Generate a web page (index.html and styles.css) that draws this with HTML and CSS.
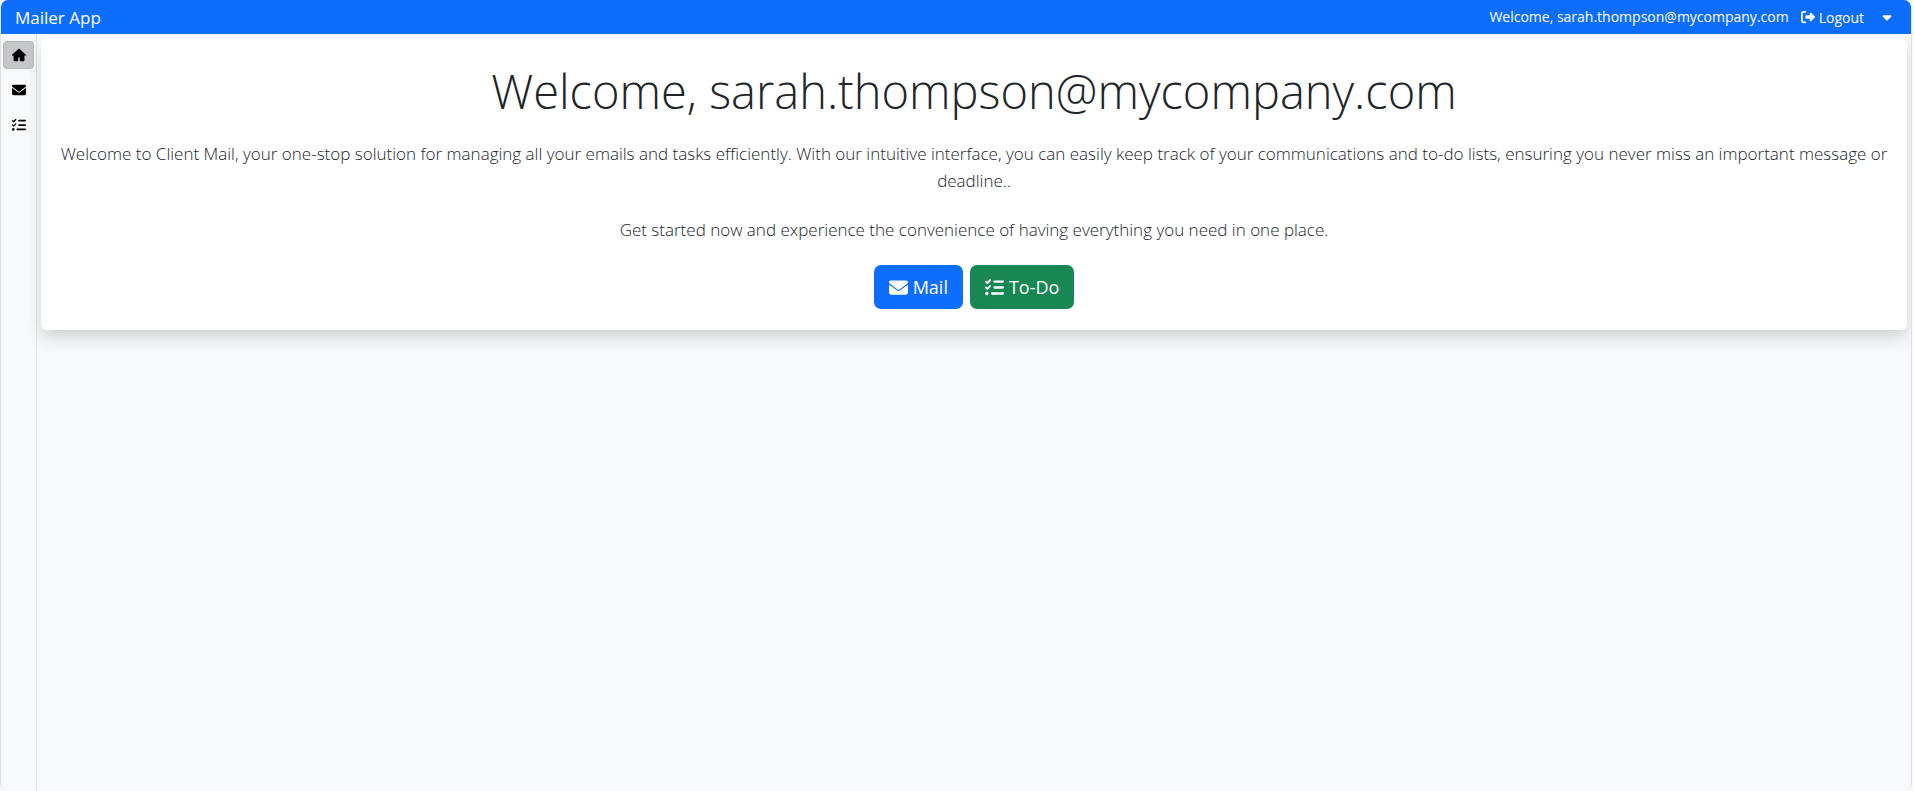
FILE: index.html
```html
<!DOCTYPE html>
<html lang="en">
<head>
<meta charset="utf-8">
<meta name="viewport" content="width=device-width, initial-scale=1">
<title>Mailer App</title>
<link rel="stylesheet" href="styles.css">
</head>
<body>
<svg class="sprite" aria-hidden="true">
  <symbol id="house" viewBox="0 0 576 512"><path d="M575.8 255.5c0 18-15 32.1-32 32.1h-32l.7 160.2c0 2.7-.2 5.4-.5 8.1V472c0 22.1-17.900 40-40 40H360c-22.100 0-40-17.900-40-40v-88c0-17.700-14.300-32-32-32s-32 14.300-32 32v88c0 22.100-17.900 40-40 40H104c-22.100 0-40-17.900-40-40V287.600H32c-18 0-32-14-32-32.100 0-9 3-17 10-24L266.400 8c7-7 15-8 22-8s15 2 21 7l255.400 224.500c8 7 12 15 11 24z"/></symbol>
  <symbol id="envelope" viewBox="0 0 512 512"><path d="M48 64C21.500 64 0 85.500 0 112c0 15.100 7.100 29.300 19.200 38.400l217.600 163.200c11.400 8.500 27 8.500 38.400 0l217.600-163.200c12.100-9.100 19.200-23.300 19.200-38.400 0-26.500-21.500-48-48-48H48zM0 176v208c0 35.300 28.700 64 64 64h384c35.300 0 64-28.700 64-64V176L294.400 339.200c-22.800 17.100-54 17.100-76.800 0L0 176z"/></symbol>
  <symbol id="tasks" viewBox="0 0 512 512"><path d="M152.100 38.200c9.900 8.900 10.700 24 1.800 33.900l-72 80c-4.400 4.900-10.600 7.800-17.200 7.900s-12.900-2.400-17.600-7L7 113c-9.300-9.400-9.300-24.600 0-34s24.600-9.400 33.900 0l22.100 22.100 55.100-61.200c8.900-9.900 24-10.700 33.900-1.800zm0 160c9.900 8.900 10.700 24 1.800 33.900l-72 80c-4.400 4.900-10.600 7.800-17.200 7.900s-12.900-2.400-17.600-7L7 273c-9.300-9.400-9.300-24.600 0-33.900s24.600-9.400 33.900 0l22.100 22.100 55.100-61.200c8.900-9.900 24-10.700 33.900-1.800zM224 96c0-17.700 14.300-32 32-32h224c17.700 0 32 14.300 32 32s-14.300 32-32 32H256c-17.700 0-32-14.300-32-32zm0 160c0-17.700 14.300-32 32-32h224c17.700 0 32 14.300 32 32s-14.300 32-32 32H256c-17.700 0-32-14.300-32-32zm-64 160c0-17.700 14.300-32 32-32h288c17.700 0 32 14.300 32 32s-14.300 32-32 32H192c-17.700 0-32-14.300-32-32zM48 368a48 48 0 1 1 0 96 48 48 0 1 1 0-96z"/></symbol>
  <symbol id="logout" viewBox="0 0 512 512"><path d="M377.900 105.900l122.800 122.800c7.200 7.200 11.300 17.100 11.300 27.300s-4.100 20.100-11.300 27.300L377.900 406.100c-6.400 6.400-15 9.900-24 9.900-18.700 0-33.900-15.200-33.900-33.900V320H192c-17.700 0-32-14.300-32-32v-64c0-17.700 14.300-32 32-32h128v-62.100c0-18.700 15.200-33.900 33.900-33.900 9 0 17.600 3.600 24 9.900zM160 96H96c-17.700 0-32 14.300-32 32v256c0 17.700 14.300 32 32 32h64c17.700 0 32 14.300 32 32s-14.300 32-32 32H96c-53 0-96-43-96-96V128c0-53 43-96 96-96h64c17.700 0 32 14.300 32 32s-14.300 32-32 32z"/></symbol>
  <symbol id="caret" viewBox="0 0 320 512"><path d="M137.400 374.600c12.500 12.500 32.800 12.500 45.300 0l128-128c9.200-9.200 11.900-22.900 6.900-34.900S301 192 288 192H32c-12.900 0-24.600 7.800-29.600 19.800s-2.200 25.700 6.900 34.900l128 128z"/></symbol>
</svg>
<div class="app">
  <header class="topbar">
    <span class="brand">Mailer App</span>
    <span class="greeting">Welcome, sarah.thompson@mycompany.com</span>
    <button class="logout" type="button"><svg class="icon"><use href="#logout"/></svg>Logout</button>
    <button class="more" type="button" aria-label="More options"><svg class="icon"><use href="#caret"/></svg></button>
  </header>
  <div class="body">
    <nav class="sidebar" aria-label="Main">
      <button class="nav-item active" type="button" aria-label="Home"><svg class="icon"><use href="#house"/></svg></button>
      <button class="nav-item" type="button" aria-label="Mail"><svg class="icon"><use href="#envelope"/></svg></button>
      <button class="nav-item" type="button" aria-label="To-Do"><svg class="icon"><use href="#tasks"/></svg></button>
    </nav>
    <main class="content">
      <section class="card">
        <h1 class="title">Welcome, sarah.thompson@mycompany.com</h1>
        <p class="lead">Welcome to Client Mail, your one-stop solution for managing all your emails and tasks efficiently. With our intuitive interface, you can easily keep track of your communications and to-do lists, ensuring you never miss an important message or deadline..</p>
        <p class="lead">Get started now and experience the convenience of having everything you need in one place.</p>
        <div class="actions">
          <button class="btn btn-mail" type="button"><svg class="icon"><use href="#envelope"/></svg>Mail</button>
          <button class="btn btn-todo" type="button"><svg class="icon"><use href="#tasks"/></svg>To-Do</button>
        </div>
      </section>
    </main>
  </div>
</div>
</body>
</html>
```
FILE: styles.css
```css
* { box-sizing: border-box; }
body {
  margin: 0;
  background: #fafafa;
  color: #212529;
  font-family: "Segoe UI", "Open Sans", "Noto Sans", sans-serif;
}
button {
  border: 0;
  padding: 0;
  background: none;
  color: inherit;
  font: inherit;
  cursor: pointer;
}
.sprite { display: none; }
.icon { display: block; width: 14px; height: 14px; fill: currentColor; }
.app {
  display: flex;
  flex-direction: column;
  height: 100vh;
  margin-right: 2px;
  border: 1px solid #dee2e6;
  border-width: 0 1px;
  border-radius: 8px;
  background: #f8f9fa;
  overflow: hidden;
}
.topbar {
  display: flex;
  align-items: center;
  height: 34px;
  padding: 0 16px 0 14px;
  background: #0d6efd;
  color: #fff;
  font-size: 14px;
}
.brand { margin-right: auto; font-size: 17px; }
.greeting { margin-right: 12px; padding-bottom: 2px; }
.logout { display: flex; align-items: center; gap: 4px; margin-right: 15px; }
.more { padding: 0 1px; }
.body { display: flex; flex: 1; min-height: 0; }
.sidebar {
  display: flex;
  flex-direction: column;
  gap: 7px;
  width: 36px;
  padding: 7px 2px;
  border-right: 1px solid #dee2e6;
}
.nav-item {
  display: grid;
  place-items: center;
  height: 28px;
  border-radius: 4px;
  color: #000;
}
.active { border: 1px solid #b5b8ba; background: #c6c7c8; }
.content { flex: 1; min-width: 0; padding: 4px; }
.card {
  padding: 24px 16px 21px;
  border-radius: 6px;
  background: #fff;
  box-shadow: 0 8px 16px rgba(0, 0, 0, 0.15);
  text-align: center;
}
.title { margin: 0 0 20px; font-size: 47px; font-weight: 300; line-height: 58px; }
.lead { margin: 0 0 22px; font-size: 17px; font-weight: 300; line-height: 27px; }
.actions { display: flex; justify-content: center; gap: 7px; }
.btn {
  display: flex;
  align-items: center;
  gap: 5px;
  height: 44px;
  padding: 0 15px;
  border-radius: 7px;
  color: #fff;
  font-size: 18px;
}
.btn .icon { width: 19px; height: 19px; }
.btn-mail { background: #0d6efd; }
.btn-todo { background: #198754; }
```
